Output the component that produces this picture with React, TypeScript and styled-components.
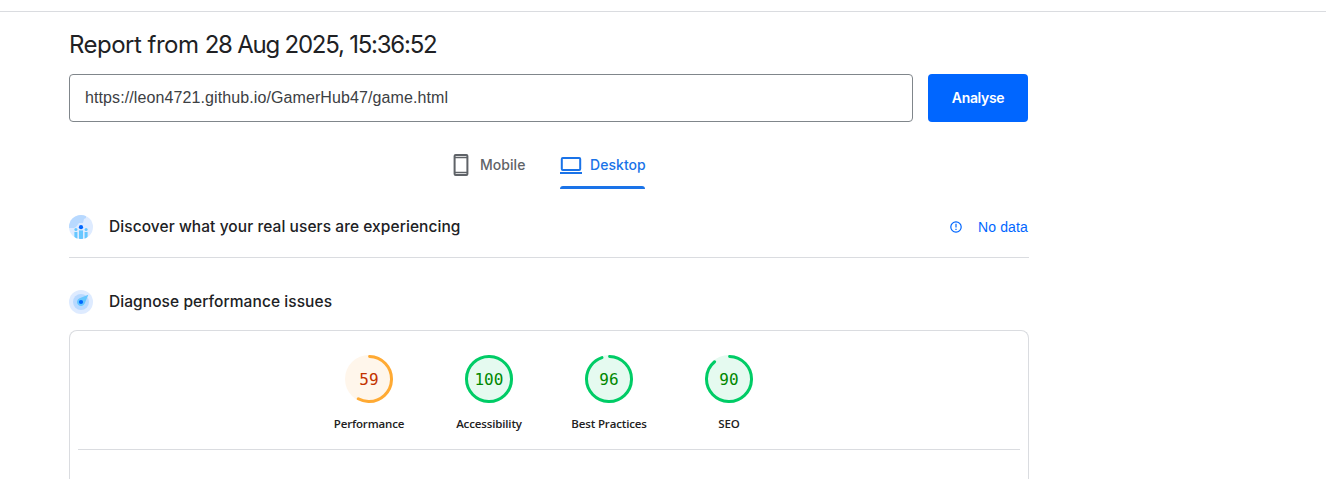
import React from 'react';
import styled, { createGlobalStyle } from 'styled-components';

const GlobalStyle = createGlobalStyle`
  *, *::before, *::after { box-sizing: border-box; }
  html, body { margin: 0; padding: 0; }
  body {
    height: 479px;
    overflow: hidden;
    background: #fff;
    color: #202124;
    font-family: Inter, 'Liberation Sans', sans-serif;
  }
  svg { display: block; flex: none; }
`;

const Page = styled.div`
  padding-top: 11px;
  height: 479px;
  overflow: hidden;
`;

const Main = styled.main`
  width: 1029px;
  padding-left: 69px;
`;

const TopRule = styled.div`
  height: 1px;
  background: #dadce0;
`;

const Title = styled.h1`
  margin: 16px 0 14px;
  height: 32px;
  font-size: 24px;
  font-weight: 400;
  line-height: 33px;
  letter-spacing: -0.52px;
  white-space: nowrap;
`;

const Timestamp = styled.span`
  letter-spacing: -1.23px;
`;

const SearchRow = styled.form`
  display: flex;
  gap: 15px;
  width: 959px;
  height: 48px;
`;

const UrlField = styled.div`
  flex: 1;
  padding: 0 15px;
  border: 1px solid #80868b;
  border-radius: 4px;
  color: #3c4043;
  font: 16px/45px 'Liberation Sans', Arial, sans-serif;
  letter-spacing: 0.1px;
`;

const AnalyseButton = styled.button`
  width: 100px;
  padding: 0;
  border: 0;
  border-radius: 4px;
  background: #06f;
  color: #fff;
  font: 600 14px/48px Inter, sans-serif;
  letter-spacing: -0.35px;
`;

const Tabs = styled.nav`
  display: flex;
  justify-content: center;
  gap: 34px;
  width: 959px;
  height: 67px;
  padding-top: 19px;
`;

const Tab = styled.div<{ $active?: boolean; $width: number }>`
  position: relative;
  display: flex;
  align-items: center;
  gap: 8px;
  width: ${(p) => p.$width}px;
  height: 48px;
  color: ${(p) => (p.$active ? '#1a73e8' : '#5f6368')};
  font-size: 14px;
  font-weight: 500;
  white-space: nowrap;

  &::after {
    content: '';
    display: ${(p) => (p.$active ? 'block' : 'none')};
    position: absolute;
    right: 0;
    bottom: 0;
    left: 0;
    height: 3px;
    border-radius: 3px 3px 0 0;
    background: currentColor;
  }
`;

const TabLabel = styled.span`
  padding-bottom: 1px;
  letter-spacing: 0.05px;
`;

const Section = styled.section<{ $ruled?: boolean }>`
  display: flex;
  align-items: center;
  width: 960px;
  height: ${(p) => (p.$ruled ? 62 : 57)}px;
  margin-top: ${(p) => (p.$ruled ? 7 : 15)}px;
  border-bottom: ${(p) => (p.$ruled ? '1px solid #dadce0' : '0')};
`;

const SectionTitle = styled.h2`
  flex: 1;
  margin: 0 0 0 16px;
  font-size: 15.5px;
  font-weight: 500;
  line-height: 24px;
  letter-spacing: 0.07px;
`;

const NoData = styled.div`
  display: flex;
  align-items: center;
  gap: 16px;
  padding-right: 1px;
  color: #06f;
  font: 14px/20px 'Liberation Sans', Arial, sans-serif;
  letter-spacing: 0.15px;
`;

const ReportCard = styled.div`
  width: 960px;
  height: 180px;
  padding: 24px 8px 0;
  border: 1px solid #dadce0;
  border-bottom: 0;
  border-radius: 8px 8px 0 0;
`;

const Gauges = styled.div`
  display: flex;
  justify-content: center;
  height: 95px;
  border-bottom: 1px solid #dadce0;
`;

const GaugeItem = styled.div`
  display: flex;
  flex-direction: column;
  align-items: center;
  width: 120px;
`;

const Dial = styled.div`
  display: grid;
  width: 48px;
  height: 48px;
  place-items: center;
  > * { grid-area: 1 / 1; }
`;

const Score = styled.span<{ $color: string }>`
  padding-top: 2px;
  color: ${(p) => p.$color};
  font: 16px/20px 'DejaVu Sans Mono', monospace;
  letter-spacing: 0.1px;
`;

const GaugeLabel = styled.span`
  margin-top: 12px;
  color: #212121;
  font: 600 11.5px/18px 'Open Sans', 'Noto Sans', sans-serif;
  letter-spacing: -0.14px;
`;

const MobileIcon = () => (
  <svg width="20" height="24" viewBox="0 0 20 24" fill="none" stroke="currentColor">
    <rect x="2.6" y="2" width="12.8" height="20" rx="1" strokeWidth="2" />
    <path d="M2.6 4.5h12.8M2.6 19.5h12.8" strokeWidth="1.5" />
  </svg>
);

const DesktopIcon = () => (
  <svg width="22" height="24" viewBox="0 0 22 24" fill="none" stroke="currentColor" strokeWidth="2">
    <rect x="1.8" y="5" width="18.4" height="12" rx="1" />
    <path d="M0 20h22" />
  </svg>
);

const UsersIcon = () => (
  <svg width="24" height="24" viewBox="0 0 24 24">
    <defs>
      <clipPath id="users-clip"><circle cx="12" cy="12" r="12" /></clipPath>
    </defs>
    <g clipPath="url(#users-clip)">
      <path fill="#deebff" d="M0 0h24v24H0z" />
      <path fill="#b8d9ff" d="M0 0h17v3l-2 1-1 4-4 0-3 4-2 1H0z" />
      <g fill="#66c7ff">
        <rect x="10" y="15.4" width="4" height="10" />
        <rect x="5.4" y="17" width="3" height="8" />
        <rect x="15.6" y="17" width="3" height="8" />
        <circle cx="6.9" cy="14.4" r="1.5" />
        <circle cx="17.1" cy="14.4" r="1.5" />
      </g>
      <circle cx="12" cy="12.2" r="2.1" fill="#06f" />
    </g>
  </svg>
);

const CompassIcon = () => (
  <svg width="24" height="24" viewBox="0 0 24 24">
    <circle cx="12" cy="12" r="12" fill="#deebff" />
    <circle cx="12" cy="12" r="8" fill="#b8d9ff" />
    <path fill="#66c7ff" d="M19.3 4.8 15.7 13.5A4 4 0 1 1 10.5 8.3Z" />
    <circle cx="12" cy="12" r="2.1" fill="#06f" />
  </svg>
);

const AlertIcon = () => (
  <svg width="12" height="12" viewBox="0 0 12 12" fill="none" stroke="#06f" strokeWidth="1.2">
    <circle cx="6" cy="6" r="5.2" />
    <path d="M6 2.8v3.8M6 7.7v1.3" />
  </svg>
);

type GaugeProps = {
  label: string;
  score: number;
  dash: number;
  stroke: string;
  fill: string;
  text: string;
};

const Gauge = ({ label, score, dash, stroke, fill, text }: GaugeProps) => (
  <GaugeItem>
    <Dial>
      <svg width="48" height="48" viewBox="0 0 48 48">
        <circle cx="24" cy="24" r="24" fill={fill} />
        <circle
          cx="24" cy="24" r="22.5" fill="none" stroke={stroke} strokeWidth="3"
          strokeLinecap="round" pathLength="100" strokeDasharray={`${dash} 100`}
          transform="rotate(-88.5 24 24)"
        />
      </svg>
      <Score $color={text}>{score}</Score>
    </Dial>
    <GaugeLabel>{label}</GaugeLabel>
  </GaugeItem>
);

const pass = { stroke: '#0c6', fill: '#e5faf0', text: '#080' };
const average = { stroke: '#fa3', fill: '#fff6eb', text: '#c33300' };

export default function App() {
  return (
    <>
      <GlobalStyle />
      <Page>
        <TopRule />
        <Main>
          <Title>Report from <Timestamp>28 Aug 2025, 15:36:52</Timestamp></Title>
          <SearchRow>
            <UrlField>https://leon4721.github.io/GamerHub47/game.html</UrlField>
            <AnalyseButton type="button">Analyse</AnalyseButton>
          </SearchRow>
          <Tabs>
            <Tab $width={74}>
              <MobileIcon />
              <TabLabel>Mobile</TabLabel>
            </Tab>
            <Tab $active $width={85}>
              <DesktopIcon />
              <TabLabel>Desktop</TabLabel>
            </Tab>
          </Tabs>
          <Section $ruled>
            <UsersIcon />
            <SectionTitle>Discover what your real users are experiencing</SectionTitle>
            <NoData><AlertIcon />No data</NoData>
          </Section>
          <Section>
            <CompassIcon />
            <SectionTitle>Diagnose performance issues</SectionTitle>
          </Section>
          <ReportCard>
            <Gauges>
              <Gauge label="Performance" score={59} dash={57.5} {...average} />
              <Gauge label="Accessibility" score={100} dash={100} {...pass} />
              <Gauge label="Best Practices" score={96} dash={94.5} {...pass} />
              <Gauge label="SEO" score={90} dash={88.5} {...pass} />
            </Gauges>
          </ReportCard>
        </Main>
      </Page>
    </>
  );
}
